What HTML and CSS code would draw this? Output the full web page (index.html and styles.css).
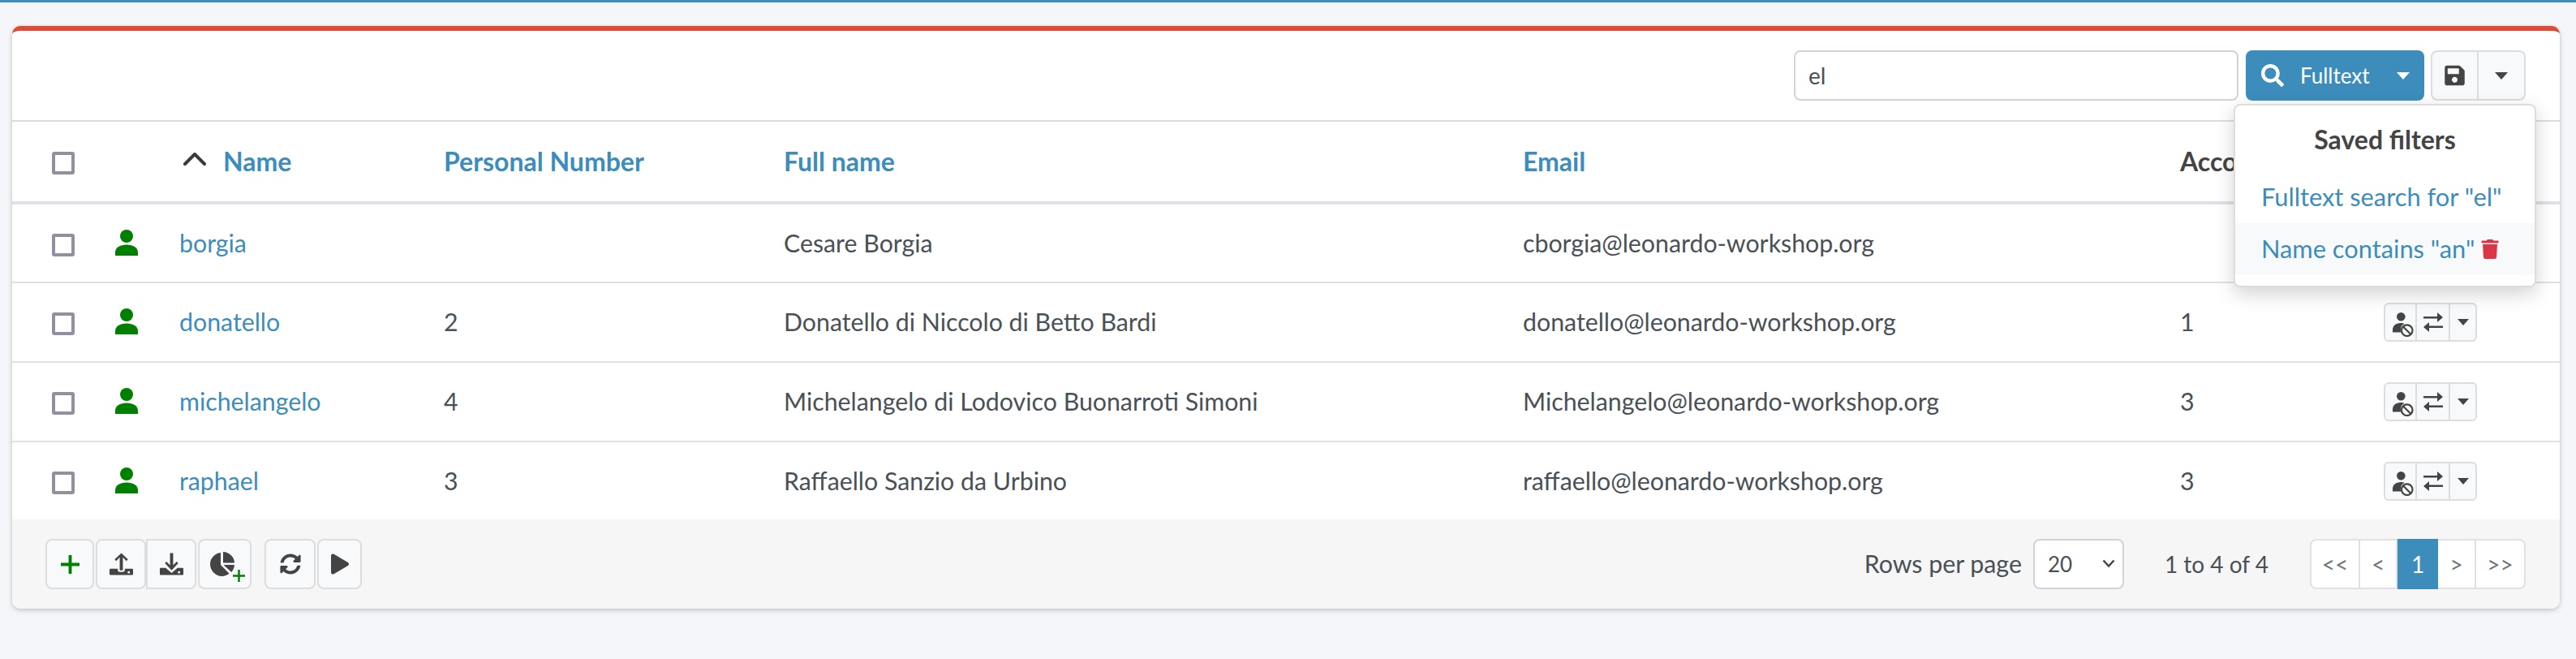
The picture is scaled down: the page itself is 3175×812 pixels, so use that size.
FILE: index.html
```html
<!DOCTYPE html>
<html lang="en">
<head>
<meta charset="utf-8">
<title>Users</title>
<link rel="stylesheet" href="styles.css">
</head>
<body>
<svg class="sprite" width="0" height="0" aria-hidden="true">
  <symbol id="i-person" viewBox="0 0 28 32"><circle cx="14" cy="8" r="8"/><path d="M0 32v-4c0-6 6-9.500 14-9.500s14 3.500 14 9.500v4z"/></symbol>
  <symbol id="i-search" viewBox="0 0 512 512"><path d="M505 442.700L405.300 343c-4.500-4.500-10.600-7-17-7H372c27.600-35.300 44-79.700 44-128C416 93.100 322.900 0 208 0S0 93.100 0 208s93.100 208 208 208c48.300 0 92.700-16.400 128-44v16.300c0 6.400 2.500 12.500 7 17l99.700 99.700c9.400 9.400 24.600 9.400 33.900 0l28.300-28.300c9.400-9.400 9.400-24.600.1-34zM208 336c-70.700 0-128-57.200-128-128 0-70.700 57.200-128 128-128 70.700 0 128 57.200 128 128 0 70.700-57.200 128-128 128z"/></symbol>
  <symbol id="i-save" viewBox="0 0 448 512"><path d="M433.941 129.941l-83.882-83.882A48 48 0 0 0 316.118 32H48C21.490 32 0 53.490 0 80v352c0 26.510 21.490 48 48 48h352c26.510 0 48-21.490 48-48V163.882a48 48 0 0 0-14.059-33.941zM224 416c-35.346 0-64-28.654-64-64 0-35.346 28.654-64 64-64s64 28.654 64 64c0 35.346-28.654 64-64 64zm96-304.520V212c0 6.627-5.373 12-12 12H76c-6.627 0-12-5.373-12-12V108c0-6.627 5.373-12 12-12h228.520c3.183 0 6.235 1.264 8.485 3.515l3.480 3.480A11.996 11.996 0 0 1 320 111.480z"/></symbol>
  <symbol id="i-trash" viewBox="0 0 448 512"><path d="M432 32H312l-9.400-18.700A24 24 0 0 0 281.100 0H166.800a23.720 23.720 0 0 0-21.400 13.300L136 32H16A16 16 0 0 0 0 48v32a16 16 0 0 0 16 16h416a16 16 0 0 0 16-16V48a16 16 0 0 0-16-16zM53.200 467a48 48 0 0 0 47.900 45h245.800a48 48 0 0 0 47.900-45L416 128H32z"/></symbol>
  <symbol id="i-sync" viewBox="0 0 512 512"><path d="M370.720 133.280C339.458 104.008 298.888 87.962 255.848 88c-77.458.068-144.328 53.178-162.791 126.850-1.344 5.363-6.122 9.150-11.651 9.150H24.103c-7.498 0-13.194-6.807-11.807-14.176C33.933 94.924 134.813 8 256 8c66.448 0 126.791 26.136 171.315 68.685L463.030 40.970C478.149 25.851 504 36.559 504 57.941V192c0 13.255-10.745 24-24 24H345.941c-21.382 0-32.090-25.851-16.971-40.971l41.750-41.749zM32 296h134.059c21.382 0 32.090 25.851 16.971 40.971l-41.750 41.750c31.262 29.273 71.835 45.319 114.876 45.280 77.418-.07 144.315-53.144 162.787-126.849 1.344-5.363 6.122-9.150 11.651-9.150h57.304c7.498 0 13.194 6.807 11.807 14.176C478.067 417.076 377.187 504 256 504c-66.448 0-126.791-26.136-171.315-68.685L48.970 471.030C33.851 486.149 8 475.441 8 454.059V320c0-13.255 10.745-24 24-24z"/></symbol>
  <symbol id="i-play" viewBox="0 0 448 512"><path d="M424.400 214.700L72.400 6.600C43.800-10.300 0 6.100 0 47.900V464c0 37.500 40.700 60.100 72.400 41.300l352-208c31.400-18.500 31.500-64.100 0-82.600z"/></symbol>
  <symbol id="i-swap" viewBox="0 0 24 24"><path d="M0 5h17V0l7 6-7 6V7.500H0zM24 16.500H7V12l-7 6 7 6v-5h17z"/></symbol>
  <symbol id="i-noperson" viewBox="0 0 26 30"><circle cx="10.300" cy="5.300" r="5.300"/><path d="M0 24.500v-3c0-5 4-8.500 10-8.500 2 0 3.500.3 4.500 1-4 1.500-5 5-4.500 10.500z"/><circle cx="17.700" cy="22.200" r="6.800" fill="none" stroke="currentColor" stroke-width="2.200"/><path d="M13 17.500l9.500 9.500" fill="none" stroke="currentColor" stroke-width="2.200"/></symbol>
  <symbol id="i-upload" viewBox="0 0 30 28"><path d="M1 20h9.500v1.500c0 1.500 1 2.500 2.500 2.500h4c1.500 0 2.500-1 2.500-2.500V20H29c.6 0 1 .4 1 1v6c0 .6-.4 1-1 1H1c-.6 0-1-.4-1-1v-6c0-.6.4-1 1-1zm23.500 3a1.500 1.500 0 1 0 0 3 1.500 1.500 0 0 0 0-3z"/><path d="M13 22V5.500L8.500 10 6.500 8 15 0l8.500 8-2 2L17 5.500V22z"/></symbol>
  <symbol id="i-download" viewBox="0 0 30 28"><path d="M1 19h6.500l7.500 6.500 7.500-6.500H29c.6 0 1 .4 1 1v7c0 .6-.4 1-1 1H1c-.6 0-1-.4-1-1v-7c0-.6.4-1 1-1zm23.500 4a1.500 1.500 0 1 0 0 3 1.500 1.500 0 0 0 0-3z"/><path d="M13 0h4v15.500L21.500 11l2 2L15 22 6.500 13l2-2 4.500 4.500z"/></symbol>
  <symbol id="i-pie" viewBox="0 0 30 30"><path d="M13 1C5.500 1.800 0 8 0 15c0 8 6.500 15 14.500 15 3.500 0 6.500-1.200 9-3.200L13 16z"/><path d="M16 0c7.500 0 14 6.500 14 13.500H16z"/><path d="M16.500 16H30c-.3 3.500-1.600 6.500-3.800 9z"/></symbol>
  <symbol id="i-plus" viewBox="0 0 24 24"><path d="M10 0h4v10h10v4H14v10h-4V14H0v-4h10z"/></symbol>
</svg>

<div class="topline"></div>
<main class="page">
  <section class="card">
    <header class="toolbar">
      <input class="search" type="text" value="el" aria-label="Search">
      <button class="fulltext" type="button">
        <svg class="ic-search"><use href="#i-search"/></svg>
        <span>Fulltext</span>
        <i class="caret caret-white"></i>
      </button>
      <div class="save-group">
        <button class="save-btn" type="button"><svg class="ic-save"><use href="#i-save"/></svg></button>
        <button class="save-caret" type="button"><i class="caret"></i></button>
      </div>
      <div class="filters-menu">
        <h3>Saved filters</h3>
        <a class="menu-item" href="#">Fulltext search for "el"</a>
        <a class="menu-item hover" href="#">Name contains "an" <svg class="ic-trash"><use href="#i-trash"/></svg></a>
      </div>
    </header>

    <table class="grid">
      <colgroup>
        <col class="c-check"><col class="c-status"><col class="c-name"><col class="c-num"><col class="c-full"><col class="c-email"><col class="c-acc"><col>
      </colgroup>
      <thead>
        <tr>
          <th class="cell-check"><span class="check"></span></th>
          <th></th>
          <th class="th-name"><svg class="chevron" viewBox="0 0 28 16"><path d="M2 14L14 2l12 12"/></svg><a href="#">Name</a></th>
          <th><a href="#">Personal Number</a></th>
          <th><a href="#">Full name</a></th>
          <th><a href="#">Email</a></th>
          <th>Accounts</th>
          <th></th>
        </tr>
      </thead>
      <tbody>
        <tr>
          <td class="cell-check"><span class="check"></span></td>
          <td class="cell-status"><svg class="ic-person"><use href="#i-person"/></svg></td>
          <td><a href="#">borgia</a></td>
          <td></td>
          <td>Cesare Borgia</td>
          <td>cborgia@leonardo-workshop.org</td>
          <td></td>
          <td></td>
        </tr>
        <tr>
          <td class="cell-check"><span class="check"></span></td>
          <td class="cell-status"><svg class="ic-person"><use href="#i-person"/></svg></td>
          <td><a href="#">donatello</a></td>
          <td>2</td>
          <td>Donatello di Niccolo di Betto Bardi</td>
          <td>donatello@leonardo-workshop.org</td>
          <td>1</td>
          <td><div class="actions"><button type="button"><svg class="ic-noperson"><use href="#i-noperson"/></svg></button><button type="button"><svg class="ic-swap"><use href="#i-swap"/></svg></button><button type="button"><i class="caret"></i></button></div></td>
        </tr>
        <tr>
          <td class="cell-check"><span class="check"></span></td>
          <td class="cell-status"><svg class="ic-person"><use href="#i-person"/></svg></td>
          <td><a href="#">michelangelo</a></td>
          <td>4</td>
          <td>Michelangelo di Lodovico Buonarroti Simoni</td>
          <td>Michelangelo@leonardo-workshop.org</td>
          <td>3</td>
          <td><div class="actions"><button type="button"><svg class="ic-noperson"><use href="#i-noperson"/></svg></button><button type="button"><svg class="ic-swap"><use href="#i-swap"/></svg></button><button type="button"><i class="caret"></i></button></div></td>
        </tr>
        <tr>
          <td class="cell-check"><span class="check"></span></td>
          <td class="cell-status"><svg class="ic-person"><use href="#i-person"/></svg></td>
          <td><a href="#">raphael</a></td>
          <td>3</td>
          <td>Raffaello Sanzio da Urbino</td>
          <td>raffaello@leonardo-workshop.org</td>
          <td>3</td>
          <td><div class="actions"><button type="button"><svg class="ic-noperson"><use href="#i-noperson"/></svg></button><button type="button"><svg class="ic-swap"><use href="#i-swap"/></svg></button><button type="button"><i class="caret"></i></button></div></td>
        </tr>
      </tbody>
    </table>

    <footer class="footer">
      <div class="tools">
        <button class="tool t-add" type="button"><svg class="ic-plus"><use href="#i-plus"/></svg></button>
        <button class="tool t-up" type="button"><svg class="ic-tray"><use href="#i-upload"/></svg></button>
        <button class="tool t-down" type="button"><svg class="ic-tray"><use href="#i-download"/></svg></button>
        <button class="tool t-pie" type="button"><svg class="ic-pie"><use href="#i-pie"/></svg><svg class="ic-mini"><use href="#i-plus"/></svg></button>
        <button class="tool t-sync" type="button"><svg class="ic-sync"><use href="#i-sync"/></svg></button>
        <button class="tool t-play" type="button"><svg class="ic-play"><use href="#i-play"/></svg></button>
      </div>
      <div class="paging">
        <span class="rows-label">Rows per page</span>
        <div class="select-wrap">
          <select class="rows-select" aria-label="Rows per page"><option>20</option><option>50</option></select>
          <svg class="select-arrow" viewBox="0 0 16 10"><path d="M1.500 1.500L8 8.500l6.500-7"/></svg>
        </div>
        <span class="range">1 to 4 of 4</span>
        <nav class="pager">
          <a href="#" class="p-first">&lt;&lt;</a><a href="#" class="p-prev">&lt;</a><a href="#" class="p-cur">1</a><a href="#" class="p-next">&gt;</a><a href="#" class="p-last">&gt;&gt;</a>
        </nav>
      </div>
    </footer>
  </section>
</main>
</body>
</html>
```
FILE: styles.css
```css
* { box-sizing: border-box; }
html, body { margin: 0; padding: 0; }
body {
  background: #f4f6f9;
  color: #495057;
  font-family: "Lato", "Noto Sans", sans-serif;
  font-size: 30.3px;
  line-height: 1.5;
  height: 812px;
  overflow: hidden;
}
a { color: #3c8dbc; text-decoration: none; }
button { font: inherit; color: inherit; padding: 0; cursor: pointer; }
svg { fill: currentColor; display: block; }
.sprite { position: absolute; }

.topline { height: 3px; background: #3c8dbc; }
.page { padding: 29px 20px 0 15px; }

.card {
  position: relative;
  background: #fff;
  border-top: 6px solid #dd4b39;
  border-radius: 10px;
  box-shadow: 0 0 2px rgba(0,0,0,.125), 0 2px 6px rgba(0,0,0,.2);
  height: 718px;
  display: flex;
  flex-direction: column;
}

.toolbar {
  position: relative;
  height: 112px;
  border-bottom: 2px solid #ddd;
  display: flex;
  justify-content: flex-end;
  align-items: flex-start;
  padding: 24px 42px 0 0;
}
.search {
  width: 548px;
  height: 62px;
  border: 2px solid #ced4da;
  border-radius: 8px;
  padding: 0 16px;
  font: inherit;
  font-size: 28px;
  color: #495057;
  margin-right: 9px;
}
.fulltext {
  width: 220px;
  height: 62px;
  background: #3c8dbc;
  color: #fff;
  border: 0;
  border-radius: 8px;
  display: flex;
  align-items: center;
  font-size: 26px;
  padding: 0 18px 0 19px;
  margin-right: 8px;
}
.ic-search { width: 28px; height: 28px; margin-right: 20px; }
.fulltext .caret { margin-left: auto; }
.caret { display: block; width: 0; height: 0; border: 8px solid transparent; border-top: 9px solid #444; border-bottom: 0; }
.caret-white { border-top-color: #fff; }
.save-group {
  display: flex;
  width: 117px;
  height: 62px;
  border: 2px solid #ddd;
  border-radius: 8px;
  background: #f8f9fa;
  color: #444;
  overflow: hidden;
}
.save-group button { background: none; border: 0; display: flex; align-items: center; justify-content: center; }
.save-btn { width: 57px; border-right: 2px solid #ddd !important; }
.save-caret { flex: 1; }
.ic-save { width: 25px; height: 28px; }

.filters-menu {
  position: absolute;
  z-index: 5;
  top: 90px;
  right: 29px;
  width: 373px;
  height: 226px;
  background: #fff;
  border: 2px solid #ddd;
  border-radius: 8px;
  box-shadow: 0 8px 24px rgba(0,0,0,.18);
  padding-top: 17px;
  font-size: 30.8px;
}
.filters-menu h3 {
  margin: 0;
  height: 50px;
  line-height: 50px;
  font-size: 32px;
  font-weight: 700;
  color: #444;
  text-align: center;
}
.menu-item {
  display: flex;
  align-items: center;
  gap: 8px;
  height: 64px;
  padding-left: 32px;
  white-space: nowrap;
}
.menu-item:first-of-type { margin-top: 14px; }
.hover { background: #f8f9fa; }
.ic-trash { width: 22px; height: 24px; color: #dc3545; }

.grid {
  width: 100%;
  border-collapse: collapse;
  table-layout: fixed;
}
.c-check { width: 117px; }
.c-status { width: 89px; }
.c-name { width: 326px; }
.c-num { width: 419px; }
.c-full { width: 911px; }
.c-email { width: 810px; }
.c-acc { width: 251px; }
.grid th, .grid td { padding: 0; text-align: left; vertical-align: middle; white-space: nowrap; }
.grid .cell-check { padding-left: 49px; }
.grid .cell-status { padding-left: 10px; }
.grid thead tr { height: 100px; border-bottom: 4px solid #dee2e6; }
.grid th { font-weight: 700; color: #444; font-size: 32px; }
.grid tbody tr { height: 98px; border-bottom: 2px solid #dee2e6; }
.grid tbody tr:last-child { height: 96px; border-bottom: 0; }
.check {
  display: block;
  width: 28px;
  height: 28px;
  margin-top: 4px;
  border: 4px solid #90909e;
  border-radius: 3px;
  background: #fff;
}
.ic-person { width: 28px; height: 32px; color: #008000; margin-bottom: 2px; }
.th-name { position: relative; }
.th-name a { margin-left: 54px; }
.chevron { position: absolute; left: 5px; top: 38px; width: 28px; height: 16px; fill: none; stroke: #3a3a3f; stroke-width: 4; stroke-linecap: round; stroke-linejoin: round; }

.actions {
  display: flex;
  width: 115px;
  height: 48px;
  border: 2px solid #ddd;
  border-radius: 6px;
  background: #f8f9fa;
  color: #444;
}
.actions button { background: none; border: 0; display: flex; align-items: center; justify-content: center; border-right: 2px solid #ddd; }
.actions button:nth-child(1) { width: 39px; }
.actions button:nth-child(2) { width: 41px; }
.actions button:nth-child(3) { flex: 1; border-right: 0; }
.actions .caret { border-width: 7px; border-top-width: 8px; border-bottom: 0; }
.ic-noperson { width: 26px; height: 30px; margin-left: 6px; margin-top: 6px; flex: none; }
.ic-swap { width: 24px; height: 24px; }

.footer {
  flex: 1;
  background: #f6f6f6;
  border-radius: 0 0 10px 10px;
  display: flex;
  justify-content: space-between;
  align-items: flex-start;
  padding: 24px 42px 0 41px;
}
.tools { display: flex; }
.tool {
  height: 62px;
  background: #f8f9fa;
  border: 2px solid #ddd;
  border-radius: 8px;
  display: flex;
  align-items: center;
  justify-content: center;
  color: #444;
  position: relative;
}
.t-add { width: 60px; margin-right: 2px; }
.t-up { width: 62px; }
.t-down { width: 62px; margin-right: 2px; border-radius: 0 8px 8px 0; }
.t-pie { width: 66px; margin-right: 16px; }
.t-sync { width: 63px; margin-right: 2px; }
.t-play { width: 55px; }
.ic-plus { width: 23px; height: 23px; color: #008000; }
.ic-tray { width: 29px; height: 28px; }
.ic-pie { width: 30px; height: 30px; margin-right: 6px; }
.ic-mini { position: absolute; width: 15px; height: 15px; color: #008000; left: 41px; top: 36px; }
.ic-sync { width: 26px; height: 26px; }
.ic-play { width: 22px; height: 26px; }

.paging { display: flex; align-items: center; height: 62px; }
.rows-label { margin-right: 14px; }
.select-wrap { position: relative; width: 112px; height: 62px; margin-right: 50px; }
.rows-select {
  appearance: none;
  width: 100%;
  height: 100%;
  background: #fff;
  border: 2px solid #ced4da;
  border-radius: 8px;
  padding: 0 0 0 16px;
  font: inherit;
  font-size: 26px;
  color: #495057;
}
.select-arrow { position: absolute; right: 11px; top: 25px; width: 16px; height: 10px; fill: none; stroke: #444; stroke-width: 2.500; pointer-events: none; }
.range { margin-right: 51px; font-size: 28px; }
.pager {
  display: flex;
  width: 266px;
  height: 62px;
  border: 2px solid #dee2e6;
  border-radius: 8px;
  background: #fff;
}
.pager a { display: flex; align-items: center; justify-content: center; font-size: 28px; color: #6c757d; border-right: 2px solid #dee2e6; }
.p-first { width: 60px; }
.p-prev { width: 46px; }
.pager .p-cur { width: 50px; margin: -2px 0; background: #3c8dbc; color: #fff; border-right: 0; }
.p-next { width: 47px; }
.pager .p-last { flex: 1; border-right: 0; }
```
